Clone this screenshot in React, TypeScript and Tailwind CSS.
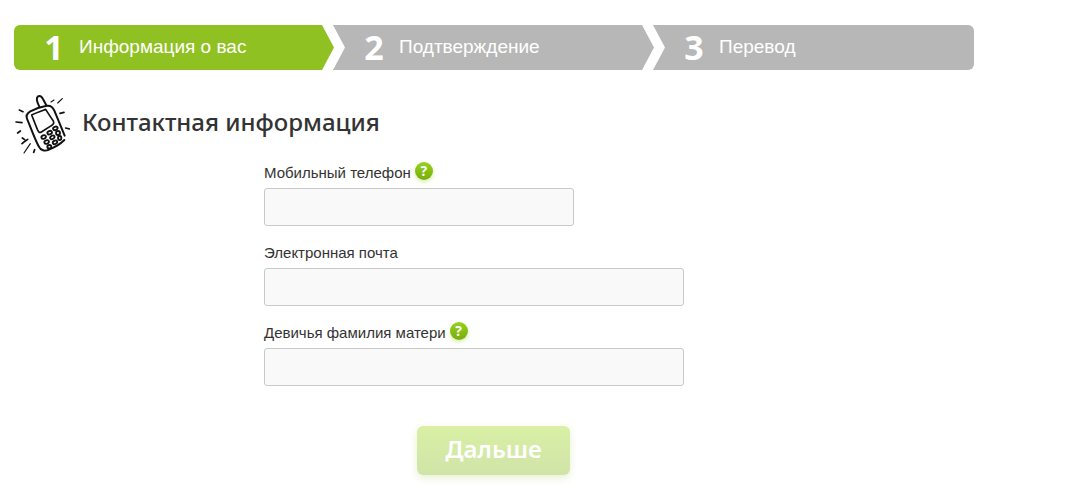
import { useState } from "react";
import type { ReactNode } from "react";

const steps = ["Информация о вас", "Подтверждение", "Перевод"];

function StepBar({ current }: { current: number }) {
  return (
    <ol className="flex text-white">
      {steps.map((title, i) => (
        <li
          key={title}
          className={`relative flex h-[45px] flex-1 items-center gap-[15px] pl-[30px] first:rounded-l-md last:rounded-r-md ${
            i === current ? "bg-[#8fc123]" : "bg-[#b7b7b7]"
          }`}
        >
          <span className="w-5 pb-0.5 text-center font-['Open_Sans',sans-serif] text-[34px] leading-none font-bold">
            {i + 1}
          </span>
          <span className="pb-0.5 text-[19px] leading-6">{title}</span>
          {i < steps.length - 1 && (
            <svg
              className="absolute top-0 -right-[11px] z-10 h-full w-[23px]"
              viewBox="0 0 23 45"
              preserveAspectRatio="none"
              fill="#fff"
              aria-hidden="true"
            >
              <path d="M0 0H11L23 22.5L11 45H0L12 22.5Z" />
            </svg>
          )}
        </li>
      ))}
    </ol>
  );
}

function PhoneIcon() {
  return (
    <svg
      className="h-[60px] w-14 shrink-0"
      viewBox="42 42 168 180"
      fill="none"
      stroke="#111"
      strokeWidth="6"
      strokeLinecap="round"
      strokeLinejoin="round"
      aria-hidden="true"
    >
      <path d="M118 80C111 66 107 54 114 49C122 45 127 53 131 61L139 76" />
      <path d="M194 167L163 92C158 80 149 75 137 78C119 81 104 87 91 94C80 100 77 108 82 119C94 147 103 174 116 199C122 211 134 215 147 209C164 202 179 194 193 180" />
      <path d="M95 105C109 97 124 94 137 88C144 99 151 110 160 123C163 129 160 134 154 137L124 156C118 160 115 155 112 148Z" strokeWidth="5" />
      <g strokeWidth="5.5">
        <ellipse cx="131" cy="171" rx="7" ry="5" transform="rotate(-22 131 171)" />
        <ellipse cx="149" cy="158" rx="7" ry="5" transform="rotate(-22 149 158)" />
        <ellipse cx="166" cy="145" rx="7" ry="5" transform="rotate(-22 166 145)" />
        <ellipse cx="140" cy="186" rx="7" ry="5" transform="rotate(-22 140 186)" />
        <ellipse cx="157" cy="172" rx="7" ry="5" transform="rotate(-32 157 172)" />
        <ellipse cx="174" cy="159" rx="6" ry="6" />
        <ellipse cx="148" cy="200" rx="6" ry="5" />
        <ellipse cx="165" cy="187" rx="7" ry="5" transform="rotate(-30 165 187)" />
        <ellipse cx="179" cy="174" rx="5" ry="6" />
      </g>
      <g strokeWidth="5">
        <path d="M58 90L69 95M48 126L66 128M53 159L61 153M66 191L72 186M67 174L74 179M75 184L83 178M101 217L104 209M180 100L192 97M197 144L209 147" />
        <path d="M72 219L91 191M153 66L162 60M173 69L187 56" strokeWidth="3.5" />
      </g>
    </svg>
  );
}

function HelpButton() {
  return (
    <button
      type="button"
      aria-label="Подсказка"
      className="mb-1 flex size-[18px] items-center justify-center rounded-full bg-linear-to-b from-[#94d21c] to-[#7aac0c] font-['Open_Sans',sans-serif] text-sm leading-none font-bold text-white shadow-[0_2px_4px_#d7edaa]"
    >
      ?
    </button>
  );
}

type FieldProps = {
  id: string;
  label: string;
  type: string;
  width: string;
  help?: ReactNode;
};

function Field({ id, label, type, width, help }: FieldProps) {
  const [value, setValue] = useState("");
  return (
    <div>
      <div className="flex h-7 items-center gap-1 pb-0.5">
        <label htmlFor={id} className="text-[15px] leading-5 text-[#333]">
          {label}
        </label>
        {help}
      </div>
      <input
        id={id}
        type={type}
        value={value}
        onChange={(e) => setValue(e.target.value)}
        className={`block h-[38px] w-full rounded-[3px] border border-[#c8c8c8] bg-[#f9f9f9] px-3 text-base text-[#333] ${width}`}
      />
    </div>
  );
}

export default function App() {
  return (
    <main className="max-w-[988px] bg-white px-3.5 pt-[25px] pb-5 font-['Liberation_Sans',Arial,sans-serif]">
      <StepBar current={0} />
      <header className="mt-6 flex items-center gap-3">
        <PhoneIcon />
        <h1 className="pb-1 font-['Noto_Sans',sans-serif] text-2xl font-medium text-[#333]">
          Контактная информация
        </h1>
      </header>
      <form className="ml-[250px] max-w-[420px]" onSubmit={(e) => e.preventDefault()}>
        <div className="mt-1.5 flex flex-col gap-3.5">
          <Field id="phone" label="Мобильный телефон" type="tel" width="max-w-[310px]" help={<HelpButton />} />
          <Field id="email" label="Электронная почта" type="email" width="max-w-[420px]" />
          <Field id="maiden" label="Девичья фамилия матери" type="text" width="max-w-[420px]" help={<HelpButton />} />
        </div>
        <button
          type="submit"
          className="mt-10 ml-[153px] h-[49px] w-[153px] rounded-md bg-linear-to-b from-[#d9f0a5] to-[#d0e4a8] pb-1 font-['Noto_Sans',sans-serif] text-2xl font-semibold text-white shadow-[0_3px_8px_#e6f1d2]"
        >
          Дальше
        </button>
      </form>
    </main>
  );
}
